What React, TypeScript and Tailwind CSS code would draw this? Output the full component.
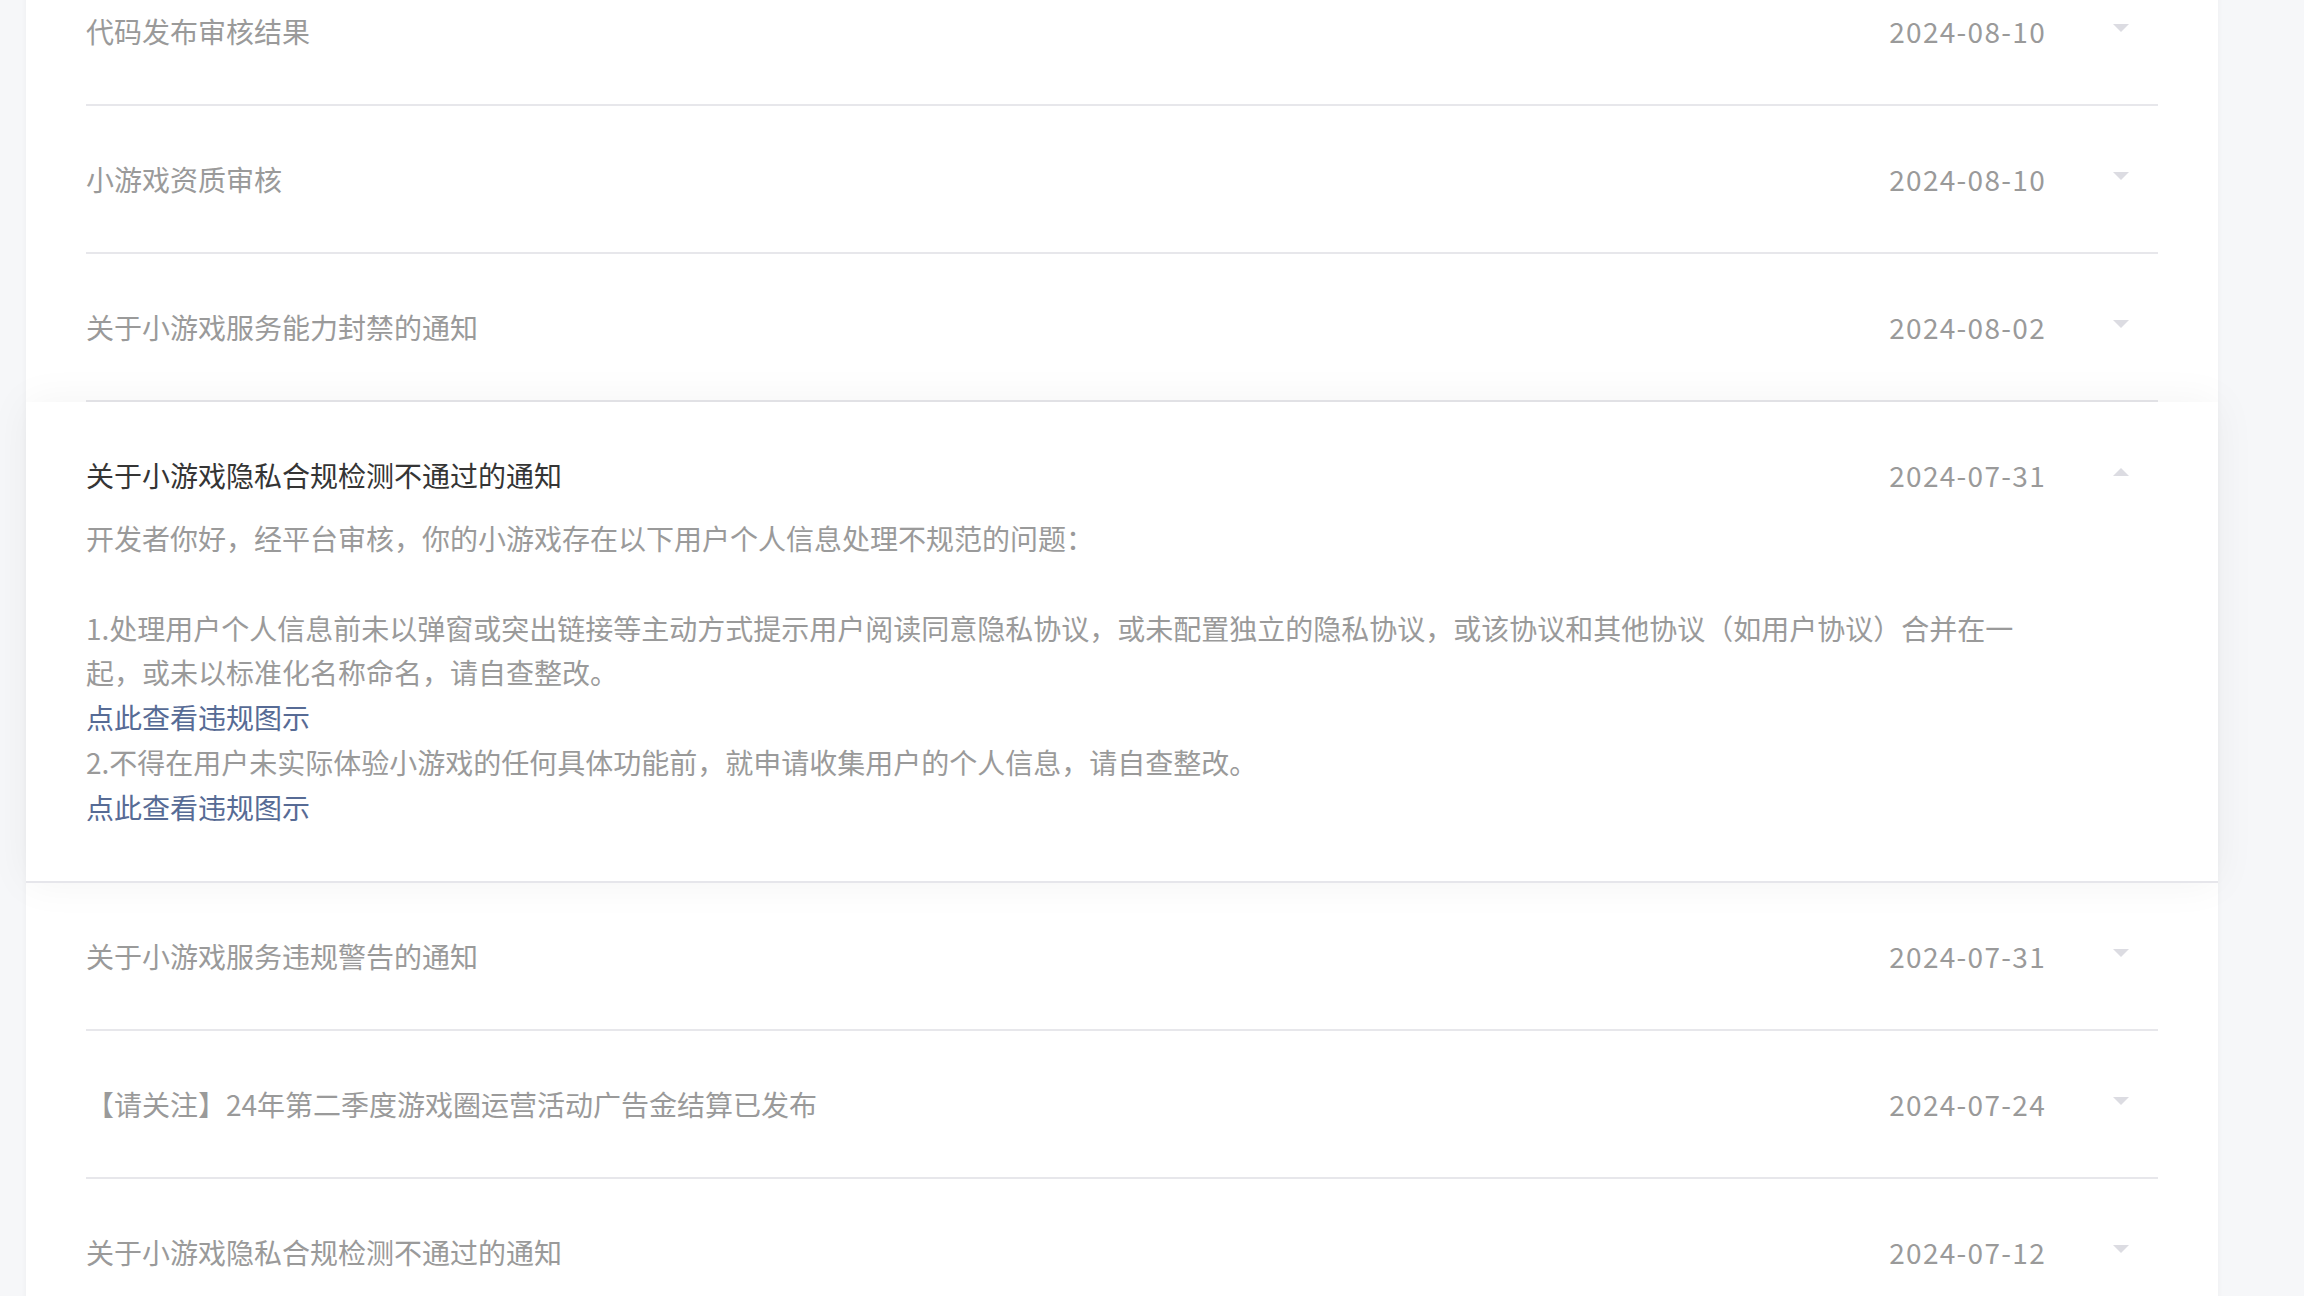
import React from 'react';

type Notice = {
  title: string;
  date: string;
  open?: boolean;
};

const NOTICES: Notice[] = [
  { title: '代码发布审核结果', date: '2024-08-10' },
  { title: '小游戏资质审核', date: '2024-08-10' },
  { title: '关于小游戏服务能力封禁的通知', date: '2024-08-02' },
  { title: '关于小游戏隐私合规检测不通过的通知', date: '2024-07-31', open: true },
  { title: '关于小游戏服务违规警告的通知', date: '2024-07-31' },
  { title: '【请关注】24年第二季度游戏圈运营活动广告金结算已发布', date: '2024-07-24' },
  { title: '关于小游戏隐私合规检测不通过的通知', date: '2024-07-12' },
];

const FONT = "font-['Noto_Sans_CJK_SC',sans-serif]";

function Arrow({ up }: { up?: boolean }) {
  return (
    <span
      className={`ml-[67px] mr-[29px] mt-[15px] h-0 w-0 shrink-0 self-start border-x-[8px] border-x-transparent ${
        up ? 'border-b-[8px] border-b-[#dcdce2]' : 'border-t-[8px] border-t-[#dcdce2]'
      }`}
    />
  );
}

function Row({ notice }: { notice: Notice }) {
  return (
    <div className="px-[60px]">
      <div className="flex items-start border-b-2 border-[#e7e7eb] py-[51px] text-[28px] leading-[44px] text-[#9a9a9a]">
        <span className="min-w-0 flex-1 truncate">{notice.title}</span>
        <span className="shrink-0 tracking-[1.3px]">{notice.date}</span>
        <Arrow />
      </div>
    </div>
  );
}

function OpenRow({ notice }: { notice: Notice }) {
  return (
    <div className="relative z-10 border-b-2 border-[#e6e6eb] bg-white px-[60px] py-[51px] shadow-[0_0_40px_rgba(0,0,0,0.05)]">
      <div className="flex items-start text-[28px] leading-[44px]">
        <span className="min-w-0 flex-1 text-[#353535]">{notice.title}</span>
        <span className="shrink-0 tracking-[1.3px] text-[#9a9a9a]">{notice.date}</span>
        <Arrow up />
      </div>
      <div className="mt-[19px] max-w-[1942px] text-[28px] leading-[44.8px] text-[#9a9a9a]">
        <p>开发者你好，经平台审核，你的小游戏存在以下用户个人信息处理不规范的问题：</p>
        <p>&nbsp;</p>
        <p>
          1.处理用户个人信息前未以弹窗或突出链接等主动方式提示用户阅读同意隐私协议，或未配置独立的隐私协议，或该协议和其他协议（如用户协议）合并在一起，或未以标准化名称命名，请自查整改。
        </p>
        <a href="#" className="block text-[#576b95]">
          点此查看违规图示
        </a>
        <p>2.不得在用户未实际体验小游戏的任何具体功能前，就申请收集用户的个人信息，请自查整改。</p>
        <a href="#" className="block text-[#576b95]">
          点此查看违规图示
        </a>
      </div>
    </div>
  );
}

export default function App() {
  return (
    <div className={`h-[1296px] overflow-hidden bg-[#f6f7f9] pl-[26px] ${FONT}`}>
      <div className="mt-[-42px] w-[2192px] bg-white shadow-[0_0_6px_rgba(0,0,0,0.04)]">
        {NOTICES.map((n, i) =>
          n.open ? <OpenRow key={i} notice={n} /> : <Row key={i} notice={n} />
        )}
      </div>
    </div>
  );
}
